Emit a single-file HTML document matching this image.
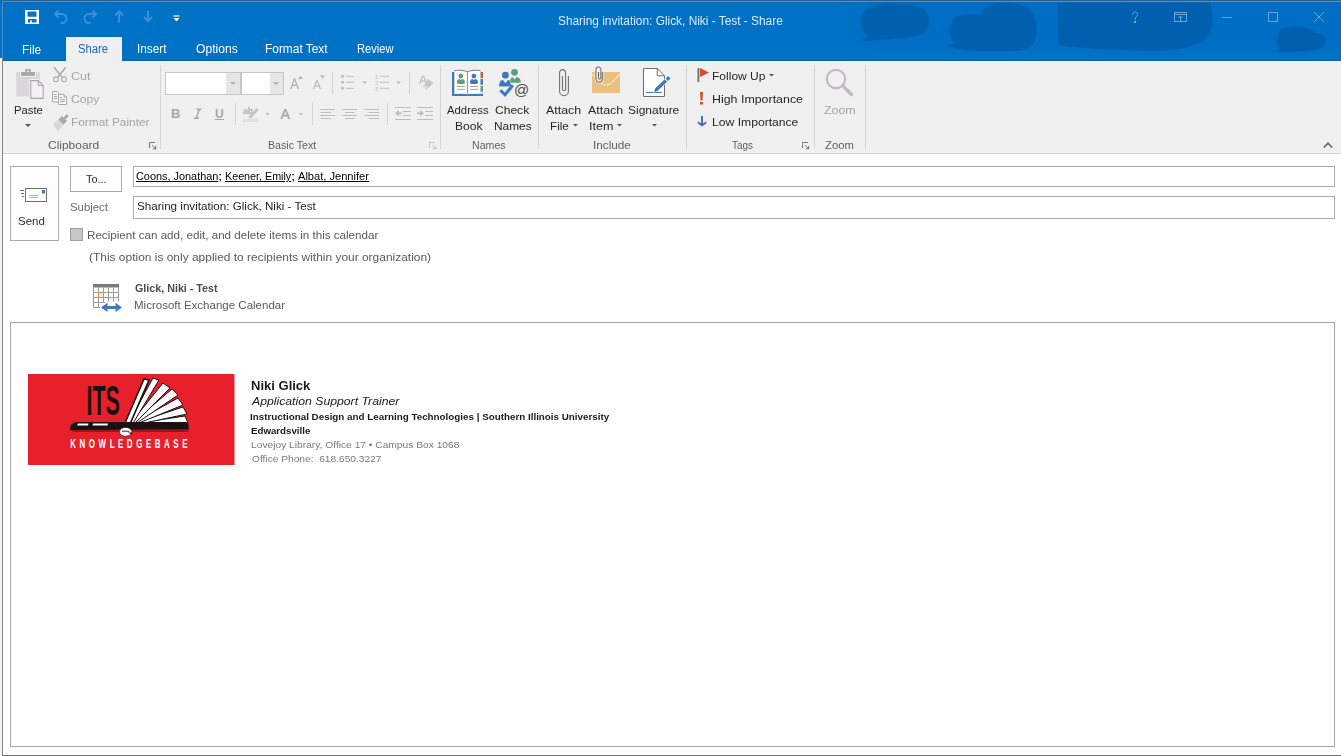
<!DOCTYPE html>
<html><head><meta charset="utf-8">
<style>
*{margin:0;padding:0;box-sizing:border-box}
html,body{width:1341px;height:756px;overflow:hidden;background:#fff;font-family:"Liberation Sans",sans-serif}
.t{position:absolute;white-space:pre;line-height:1;transform-origin:0 0}
.b{position:absolute}
svg{position:absolute;overflow:visible}
</style></head><body>
<!-- title bar -->
<div class="b" style="left:0;top:0;width:1341px;height:61px;background:#0072c6;overflow:hidden">
  <svg style="left:0;top:0" width="1341" height="60" viewBox="0 0 1341 60">
    <defs><linearGradient id="gd" x1="0" x2="1" y1="0" y2="0"><stop offset="0" stop-color="#006ec4" stop-opacity="0"/><stop offset="0.12" stop-color="#006ec4" stop-opacity="1"/></linearGradient>
    <linearGradient id="gv" x1="0" x2="0" y1="0" y2="1"><stop offset="0.8" stop-color="#fff" stop-opacity="1"/><stop offset="1" stop-color="#fff" stop-opacity="0"/></linearGradient>
    <mask id="mv"><rect x="0" y="0" width="1341" height="54" fill="url(#gv)"/></mask></defs>
    <rect x="830" y="2" width="511" height="52" fill="url(#gd)" mask="url(#mv)"/>
    <g fill="#0060af">
      <path d="M888 4 C872 4 861 10 861 22 C861 29 864 34 868 36 L861 41 C874 41 888 39 898 38 C918 38 929 32 929 21 C929 10 920 5 908 5 C902 5 896 4 888 4Z"/>
      <path d="M1003 3 C990 3 982 9 980 15 C974 14 966 14 958 16 C950 19 949 28 950 36 C951 40 953 42 955 43 L947 46 C960 51 985 52 1010 51 C1025 51 1033 48 1035 40 C1038 30 1037 18 1030 10 C1024 5 1015 3 1003 3Z"/>
      <path d="M1058 3 L1210 3 C1215 18 1214 32 1202 41 C1192 48 1172 51 1150 51 L1100 49 C1080 48 1066 46 1058 45 Z"/>
      <path d="M1285 28 C1276 30 1275 44 1280 48 L1278 52 C1295 52 1310 52 1322 48 C1330 42 1326 34 1316 33 C1308 26 1295 26 1285 28Z"/>
    </g>
  </svg>
  <!-- QAT icons -->
  <svg style="left:25px;top:10px" width="15" height="14" viewBox="0 0 15 14">
    <path fill-rule="evenodd" fill="#fff" d="M0 0 H14 V14 H0Z M2.5 1.5 V6.8 H11.5 V1.5Z M3 9 V12.5 H5 V10.5 H7 V12.5 H11.5 V9Z"/>
  </svg>
  <svg style="left:53px;top:9px" width="16" height="16" viewBox="0 0 16 16">
    <path d="M5.5 1.5 L2 5 L5.5 8.5 M2.3 5 H9 C11.8 5 13.5 7 13.5 9.5 C13.5 12 11.8 14 9 14 H7.5" fill="none" stroke="#3a8fd9" stroke-width="2"/>
  </svg>
  <svg style="left:82px;top:9px" width="16" height="16" viewBox="0 0 16 16">
    <path d="M10.5 1.5 L14 5 L10.5 8.5 M13.7 5 H7 C4.2 5 2.5 7 2.5 9.5 C2.5 12 4.2 14 7 14 H8.5" fill="none" stroke="#3a8fd9" stroke-width="2"/>
  </svg>
  <svg style="left:114px;top:10px" width="10" height="13" viewBox="0 0 10 13">
    <path d="M5 2 V12.5 M1 5.5 L5 1.5 L9 5.5" fill="none" stroke="#3a8fd9" stroke-width="2"/>
  </svg>
  <svg style="left:143px;top:10px" width="10" height="13" viewBox="0 0 10 13">
    <path d="M5 0.5 V11 M1 7 L5 11 L9 7" fill="none" stroke="#3a8fd9" stroke-width="2"/>
  </svg>
  <svg style="left:173px;top:15px" width="7" height="8" viewBox="0 0 7 8">
    <path d="M0.5 1 H6.5" stroke="#fff" stroke-width="1.2"/><path d="M0.5 3 H6.5 L3.5 6.5Z" fill="#fff"/>
  </svg>
  <!-- window controls -->
  <svg style="left:1130px;top:11px" width="200" height="14" viewBox="0 0 200 14">
    <g fill="none" stroke="#6aa6dc" stroke-width="1">
      <path d="M2.5 4 C2.5 1.5 4 1 5 1 C6.5 1 7.5 2 7.5 3.5 C7.5 5.5 5 6 5 8.5 V9"/>
      <rect x="4.5" y="10.5" width="1" height="1" fill="#6aa6dc"/>
      <rect x="44.5" y="1.5" width="12" height="9"/>
      <path d="M44.5 3.5 H56.5 M50.5 10 V5 M48.5 7 L50.5 5 L52.5 7"/>
      <path d="M92 6.5 H102"/>
      <rect x="138.5" y="1.5" width="9" height="9"/>
      <path d="M184 1 L194 11 M194 1 L184 11"/>
    </g>
  </svg>
</div>
<div class="b" style="left:2px;top:0;width:1339px;height:1px;background:#2c608d"></div>
<div class="b" style="left:2px;top:1px;width:1339px;height:1px;background:#4893cb"></div>
<div class="b" style="left:2px;top:1px;width:1px;height:57px;background:#4893cb"></div>
<div class="b" style="left:3px;top:2px;width:1338px;height:1px;background:#0a68b4"></div>
<div class="b" style="left:3px;top:2px;width:1px;height:58px;background:#1a67a8"></div>
<div class="b" style="left:3px;top:60px;width:1338px;height:1px;background:#1262a6"></div>

<!-- ribbon -->
<div class="b" style="left:3px;top:61px;width:1338px;height:92px;background:#f0f0f0"></div>
<div class="b" style="left:3px;top:61px;width:1338px;height:1px;background:#dcfbff"></div>
<div class="b" style="left:3px;top:62px;width:1338px;height:1px;background:#e8f2f9"></div>
<!-- active tab -->
<div class="b" style="left:66px;top:37px;width:56px;height:26px;background:#f0f0f0;border:1px solid #dcf8ff;border-bottom:0"></div>
<div class="b" style="left:2px;top:153px;width:1339px;height:1px;background:#d4d4d4"></div>
<div class="b" style="left:0;top:58px;width:2px;height:698px;background:#f3f3f3"></div>
<div class="b" style="left:2px;top:58px;width:1px;height:697px;background:#868686"></div>
<!-- group separators -->
<div class="b" style="left:160px;top:65px;width:1px;height:84px;background:#d5d5d5"></div>
<div class="b" style="left:440px;top:65px;width:1px;height:84px;background:#d5d5d5"></div>
<div class="b" style="left:538px;top:65px;width:1px;height:84px;background:#d5d5d5"></div>
<div class="b" style="left:686px;top:65px;width:1px;height:84px;background:#d5d5d5"></div>
<div class="b" style="left:814px;top:65px;width:1px;height:84px;background:#d5d5d5"></div>
<div class="b" style="left:865px;top:65px;width:1px;height:84px;background:#d5d5d5"></div>

<!-- Clipboard icons -->
<svg style="left:12px;top:64px" width="36" height="38" viewBox="0 0 36 38">
  <rect x="4.2" y="7.9" width="23.6" height="24.6" rx="1" fill="#d9d7d9"/>
  <rect x="8" y="7" width="16" height="6" fill="#f0f0f0"/>
  <rect x="9" y="8" width="14" height="3.9" fill="#a9a9a9"/>
  <rect x="13.2" y="5" width="5.6" height="3.5" rx="1" fill="#a9a9a9"/>
  <rect x="15.2" y="6.5" width="1.7" height="1.6" fill="#f0f0f0"/>
  <path d="M18.8 16.6 H26.3 L31.2 21.5 V34.4 H18.8Z" fill="#f3f1f3" stroke="#f0f0f0" stroke-width="3"/>
  <path d="M18.8 16.6 H26.3 L31.2 21.5 V34.4 H18.8Z" fill="#f3f1f3" stroke="#a9a9a9" stroke-width="1.1"/>
  <path d="M26.3 16.6 V21.5 H31.2" fill="none" stroke="#a9a9a9" stroke-width="1.1"/>
</svg>
<svg style="left:25px;top:124px" width="6" height="4" viewBox="0 0 6 4"><path d="M0 0 H6 L3 3Z" fill="#555"/></svg>
<svg style="left:52px;top:66px" width="16" height="17" viewBox="0 0 16 17">
  <g fill="none" stroke="#a9a9a9"><path d="M2 1.2 L9.8 11" stroke-width="1.5"/><path d="M13.8 1.2 L6 11" stroke-width="1.5"/><circle cx="3.9" cy="13.3" r="2.4" stroke-width="1.1"/><circle cx="12" cy="13.3" r="2.4" stroke-width="1.1"/></g>
</svg>
<svg style="left:52px;top:91px" width="16" height="15" viewBox="0 0 16 15">
  <path d="M0.5 0.5 H5.5 L7 2 V11 H0.5Z" fill="#f4f4f4" stroke="#a9a9a9" stroke-width="1"/>
  <path d="M2 3.5 H4.5 M2 5.5 H5 M2 7.5 H5" stroke="#a9a9a9" stroke-width="1"/>
  <path d="M6.5 3.5 H12 L14.5 6 V13.5 H6.5Z" fill="#fff" stroke="#a9a9a9" stroke-width="1"/>
  <path d="M12 3.5 V6 H14.5" fill="none" stroke="#a9a9a9" stroke-width="1"/>
  <path d="M8 6.5 H10.5 M8 8.5 H13 M8 10.5 H13" stroke="#a9a9a9" stroke-width="1"/>
</svg>
<svg style="left:50px;top:112px" width="20" height="20" viewBox="0 0 20 20">
  <g transform="translate(18 3) rotate(45)">
    <rect x="-1.4" y="0" width="2.8" height="5" rx="1" fill="#a9a9a9"/>
    <rect x="-3.6" y="5" width="7.2" height="5.2" fill="#a9a9a9"/>
    <path d="M-3.8 10.7 H3.8 L4.3 18.5 L-4.3 17Z" fill="#d9d7d9"/>
  </g>
</svg>
<svg style="left:149px;top:142px" width="8" height="8" viewBox="0 0 8 8"><path d="M0.5 6 V0.5 H6" fill="none" stroke="#7a7a7a" stroke-width="1"/><path d="M3.2 3.2 L5 5" stroke="#7a7a7a" stroke-width="1"/><path d="M3.5 7.2 H7.2 V3.5Z" fill="#7a7a7a"/></svg>

<!-- Basic text -->
<div class="b" style="left:165px;top:72px;width:76px;height:23px;border:1px solid #c6c6c6;background:#fff"></div>
<div class="b" style="left:226px;top:73px;width:14px;height:21px;background:#e6e6e6"></div>
<div class="b" style="left:241px;top:72px;width:43px;height:23px;border:1px solid #c6c6c6;background:#fff"></div>
<div class="b" style="left:270px;top:73px;width:13px;height:21px;background:#e6e6e6"></div>
<svg style="left:230px;top:82px" width="6" height="4" viewBox="0 0 6 4"><path d="M0 0 H6 L3 3Z" fill="#b3b3b3"/></svg>
<svg style="left:273px;top:82px" width="6" height="4" viewBox="0 0 6 4"><path d="M0 0 H6 L3 3Z" fill="#b3b3b3"/></svg>
<svg style="left:289px;top:75px" width="40" height="16" viewBox="0 0 40 16">
  <g fill="#b3b3b3"><path d="M1 14 L5 3 H6 L10 14 H8.6 L7.5 11 H3.5 L2.4 14Z M4 9.6 H7 L5.5 5.3Z"/><path d="M9 4 L11.5 1 L14 4Z"/>
  <path d="M24 14 L27.5 5 H28.5 L32 14 H30.8 L29.9 11.6 H26.1 L25.2 14Z M26.5 10.4 H29.5 L28 6.5Z"/><path d="M31 0.5 H36 L33.5 3.5Z"/></g>
</svg>
<div class="b" style="left:332px;top:72px;width:1px;height:22px;background:#d5d5d5"></div>
<div class="b" style="left:409px;top:72px;width:1px;height:22px;background:#d5d5d5"></div>
<svg style="left:340px;top:74px" width="65" height="18" viewBox="0 0 65 18">
  <g fill="#bdbdbd"><circle cx="2.5" cy="2.3" r="1.5"/><circle cx="2.5" cy="8.3" r="1.5"/><circle cx="2.5" cy="14.3" r="1.5"/></g>
  <g stroke="#bdbdbd" stroke-width="1"><path d="M6 2.3 H14 M6 8.3 H14 M6 14.3 H14 M40 2.3 H49 M40 8.3 H49 M40 14.3 H49"/></g>
  <path d="M22 7.5 H27 L24.5 10Z M56 7.5 H61 L58.5 10Z" fill="#bdbdbd"/>
  <text x="35" y="5" font-size="5.5" fill="#bdbdbd" font-family="Liberation Sans">1</text>
  <text x="35" y="11" font-size="5.5" fill="#bdbdbd" font-family="Liberation Sans">2</text>
  <text x="35" y="17" font-size="5.5" fill="#bdbdbd" font-family="Liberation Sans">3</text>
</svg>
<svg style="left:419px;top:75px" width="15" height="16" viewBox="0 0 15 16">
  <path d="M0.5 9 L3.5 1 H4.5 L7.5 9 M1.8 6 H6.2" fill="none" stroke="#b3b3b3" stroke-width="1"/>
  <path d="M9 4 L14.5 8 L9.5 13 L5 10Z" fill="#c6c6c6"/><path d="M4.5 10.5 L9 13.5 L8 15 L3.5 12Z" fill="#d6d6d6"/>
</svg>
<svg style="left:171px;top:108px" width="60" height="13" viewBox="0 0 60 13">
  <text x="0" y="10" font-size="13" font-weight="bold" fill="#a8a8a8" font-family="Liberation Sans">B</text>
  <path d="M25.5 1.3 H30.5 M23 10.3 H28 M28.3 1.3 L25.2 10.3" fill="none" stroke="#a8a8a8" stroke-width="1.5"/>
  <text x="44" y="10" font-size="12" font-weight="bold" fill="#a8a8a8" font-family="Liberation Sans">U</text>
  <rect x="44" y="11" width="9" height="1" fill="#a8a8a8"/>
</svg>
<div class="b" style="left:235px;top:103px;width:1px;height:22px;background:#d5d5d5"></div>
<div class="b" style="left:312px;top:103px;width:1px;height:22px;background:#d5d5d5"></div>
<div class="b" style="left:387px;top:103px;width:1px;height:22px;background:#d5d5d5"></div>
<svg style="left:243px;top:106px" width="62" height="17" viewBox="0 0 62 17">
  <text x="0" y="8" font-size="8.5" font-weight="bold" fill="#ababab" font-family="Liberation Sans">ab</text>
  <path d="M14 2 L16 4 L8 12 L5.5 12.5 L6 10Z" fill="#c3c3c3"/>
  <rect x="0" y="13" width="15.5" height="3" fill="#e2dfe2"/>
  <path d="M22 7 H27 L24.5 9.5Z" fill="#bdbdbd"/>
  <path d="M37.3 13 L41.3 3 H43.3 L47.3 13 H45.2 L44.3 10.5 H40.3 L39.4 13Z M40.9 8.8 H43.7 L42.3 5Z" fill="#ababab"/>
  <path d="M55.5 7 H60.5 L58 9.5Z" fill="#bdbdbd"/>
</svg>
<svg style="left:320px;top:108px" width="114" height="13" viewBox="0 0 114 13">
  <g stroke="#bdbdbd" stroke-width="1.1">
    <path d="M0.5 1.5 H15 M0.5 4.5 H11 M0.5 7.5 H15 M0.5 10.5 H11"/>
    <path d="M22.5 1.5 H37 M25 4.5 H34.5 M22.5 7.5 H37 M25 10.5 H34.5"/>
    <path d="M44.5 1.5 H59 M48.5 4.5 H59 M44.5 7.5 H59 M48.5 10.5 H59"/>
    <path d="M75 -0.5 H91 M83 3.5 H91 M83 7.5 H91 M75 11.5 H91"/>
    <path d="M97 -0.5 H113 M105 3.5 H113 M105 7.5 H113 M97 11.5 H113"/>
  </g>
  <path d="M75 5.2 L79 2 V4.5 H82 V6 H79 V8.5Z" fill="#bdbdbd"/>
  <path d="M104 5.2 L100 2 V4.5 H97 V6 H100 V8.5Z" fill="#bdbdbd"/>
</svg>
<svg style="left:429px;top:142px" width="8" height="8" viewBox="0 0 8 8"><path d="M0.5 6 V0.5 H6" fill="none" stroke="#c4c4c4" stroke-width="1"/><path d="M3.2 3.2 L5 5" stroke="#c4c4c4" stroke-width="1"/><path d="M3.5 7.2 H7.2 V3.5Z" fill="#c4c4c4"/></svg>

<!-- Names -->
<svg style="left:448px;top:66px" width="40" height="34" viewBox="0 0 40 34">
  <path d="M4 6 H6.5 V27.7 H35 V30 H4Z" fill="#3f78bd"/>
  <rect x="6" y="4" width="27" height="23.7" fill="#fff"/>
  <path d="M6.3 4.6 C10 4 16 4 19.4 5.8 C23 4 29 4 32.6 4.6" fill="none" stroke="#787878" stroke-width="1"/>
  <path d="M6.5 4.5 V27.5 M32.5 4.5 V27.5" stroke="#c8c8c8" stroke-width="0.8"/>
  <path d="M19.4 5.5 V27.7" stroke="#8a8a8a" stroke-width="1"/>
  <path d="M6 27.7 C11 27 16 27 19.4 28 C23 27 28 27 33 27.7" fill="none" stroke="#dde6f2" stroke-width="0.6"/>
  <rect x="32.7" y="6" width="2.3" height="6" fill="#c8603e"/>
  <rect x="32.7" y="13" width="2.3" height="5.7" fill="#3f78bd"/>
  <rect x="32.7" y="20" width="2.3" height="5.7" fill="#5d9f7b"/>
  <circle cx="12.8" cy="10.1" r="2.4" fill="#5d9f7b"/>
  <path d="M8.8 16.5 C8.8 14 10.2 13 11.8 13 L12.8 14.3 L13.8 13 C15.5 13 17 14 17 16.5 C17 17.5 16.2 17.9 15 17.9 H10.8 C9.6 17.9 8.8 17.5 8.8 16.5Z" fill="#5d9f7b"/>
  <circle cx="25.9" cy="10.1" r="2.4" fill="#3f78bd"/>
  <path d="M21.9 16.5 C21.9 14 23.3 13 24.9 13 L25.9 14.3 L26.9 13 C28.6 13 30.1 14 30.1 16.5 C30.1 17.5 29.3 17.9 28.1 17.9 H23.9 C22.7 17.9 21.9 17.5 21.9 16.5Z" fill="#3f78bd"/>
  <path d="M9 20.5 H17 M9 23.4 H17 M22 20.5 H30 M22 23.4 H30" stroke="#9c9c9c" stroke-width="0.9"/>
</svg>
<svg style="left:494px;top:64px" width="40" height="36" viewBox="0 0 40 36">
  <circle cx="20.5" cy="8.3" r="3.4" fill="#5d9f7b"/>
  <path d="M16 18.8 C16 15 17.3 13.3 18.8 13.3 L20.5 15.8 L22.2 13.3 C25 13.3 26.8 15 26.8 18.8Z" fill="#5d9f7b"/>
  <circle cx="11.4" cy="11.2" r="3.4" fill="#3f78bd" stroke="#f0f0f0" stroke-width="0.8" paint-order="stroke"/>
  <path d="M5.2 22.5 C5.2 18 6.6 16 8.8 16 L11.4 19 L14 16 C15.8 16 16.9 17.5 16.9 22.5Z" fill="#3f78bd" stroke="#f0f0f0" stroke-width="0.8" paint-order="stroke"/>
  <path d="M6.4 26.3 L11 30.8 L18.8 21.2" fill="none" stroke="#3f78bd" stroke-width="3"/>
  <text x="20" y="31" font-size="15" fill="#4a4a4a" font-family="Liberation Sans">@</text>
</svg>

<!-- Include -->
<svg style="left:552px;top:64px" width="24" height="36" viewBox="0 0 24 36">
  <path d="M10.5 12 V25.2 A1.55 1.55 0 0 0 13.6 25.2 V8.6 A3 3 0 0 0 7.6 8.6 V27.3 A4.4 4.4 0 0 0 16.4 27.3 V12" fill="none" stroke="#707070" stroke-width="1.1"/>
</svg>
<svg style="left:588px;top:64px" width="36" height="32" viewBox="0 0 36 32">
  <rect x="4" y="8" width="28" height="21" fill="#e8c080"/>
  <path d="M4.3 10 C9 15 13 21 18 21.3 C23 21.5 27 15 31.8 9.6" fill="none" stroke="#fbe8c6" stroke-width="1.1"/>
  <path d="M10.5 8 V14 A1.2 1.2 0 0 0 12.9 14 V5.5 A2.5 2.5 0 0 0 7.9 5.5 V15.2 A3.2 3.2 0 0 0 14.3 15.2 V8" fill="none" stroke="#f3e6cf" stroke-width="2.6"/>
  <path d="M10.5 8 V14 A1.2 1.2 0 0 0 12.9 14 V5.5 A2.5 2.5 0 0 0 7.9 5.5 V15.2 A3.2 3.2 0 0 0 14.3 15.2 V8" fill="none" stroke="#656565" stroke-width="1"/>
</svg>
<svg style="left:643px;top:68px" width="30" height="30" viewBox="0 0 30 30">
  <path d="M0.5 0.5 H14.2 L21.5 7.8 V28.5 H0.5Z" fill="#fff" stroke="#6e6e6e" stroke-width="1"/>
  <path d="M14.2 0.5 V7.8 H21.5" fill="none" stroke="#6e6e6e" stroke-width="1"/>
  <path d="M3 24.5 H18.8" stroke="#3f78bd" stroke-width="1"/>
  <g transform="translate(11 24) rotate(-44)">
    <path d="M0 0 L3.2 -1.7 H16.5 V1.7 H3.2Z M17.7 -1.7 H21.3 V1.7 H17.7Z" fill="#3f78bd" stroke="#fff" stroke-width="1" paint-order="stroke"/>
  </g>
</svg>
<svg style="left:573px;top:124px" width="6" height="4" viewBox="0 0 6 4"><path d="M0 0 H5 L2.5 2.5Z" fill="#555"/></svg>
<svg style="left:617px;top:124px" width="6" height="4" viewBox="0 0 6 4"><path d="M0 0 H5 L2.5 2.5Z" fill="#555"/></svg>
<svg style="left:652px;top:124px" width="6" height="4" viewBox="0 0 6 4"><path d="M0 0 H5 L2.5 2.5Z" fill="#555"/></svg>

<!-- Tags -->
<svg style="left:697px;top:67px" width="13" height="15" viewBox="0 0 13 15">
  <rect x="0.5" y="1" width="1.8" height="14" fill="#6a6a6a"/>
  <path d="M3 1 L12 5.5 L3 10Z" fill="#d44e2c"/>
</svg>
<svg style="left:769px;top:74px" width="6" height="4" viewBox="0 0 6 4"><path d="M0 0 H5 L2.5 2.5Z" fill="#555"/></svg>
<svg style="left:699px;top:92px" width="5" height="13" viewBox="0 0 5 13">
  <path d="M1 0 H4 L3.5 8.5 H1.5Z" fill="#d44e2c"/><rect x="1" y="10" width="3" height="2.5" fill="#d44e2c"/>
</svg>
<svg style="left:697px;top:115px" width="10" height="12" viewBox="0 0 10 12">
  <path d="M0.8 6 L4 8.6 V1 H6 V8.6 L9.2 6 V8.4 L5 11.6 L0.8 8.4Z" fill="#3d72b4"/>
</svg>
<svg style="left:802px;top:142px" width="8" height="8" viewBox="0 0 8 8"><path d="M0.5 6 V0.5 H6" fill="none" stroke="#7a7a7a" stroke-width="1"/><path d="M3.2 3.2 L5 5" stroke="#7a7a7a" stroke-width="1"/><path d="M3.5 7.2 H7.2 V3.5Z" fill="#7a7a7a"/></svg>
<!-- Zoom -->
<svg style="left:825px;top:68px" width="30" height="30" viewBox="0 0 30 30">
  <circle cx="11" cy="11" r="9.2" fill="#f2eff2" stroke="#bdbdbd" stroke-width="2.2"/>
  <path d="M17.5 17.5 L26.5 26.5" stroke="#bdbdbd" stroke-width="3.3" stroke-linecap="round"/>
</svg>
<!-- collapse caret -->
<svg style="left:1323px;top:141px" width="10" height="8" viewBox="0 0 10 8"><path d="M0.8 6.5 L5 2.2 L9.2 6.5" fill="none" stroke="#666" stroke-width="1.7"/></svg>

<!-- Compose -->
<div class="b" style="left:10px;top:166px;width:49px;height:75px;border:1px solid #ababab;background:#fdfdfd"></div>
<svg style="left:19px;top:187px" width="30" height="16" viewBox="0 0 30 16">
  <rect x="6.5" y="1.5" width="21" height="13" fill="#fff" stroke="#6e6e6e" stroke-width="1"/>
  <rect x="23" y="3" width="3" height="3.5" fill="#3f78bd"/>
  <path d="M10 8.5 H20 M10 10.5 H19" stroke="#a0a0a0" stroke-width="0.8"/>
  <path d="M1 3.5 H5 M2 6.5 H5 M3 9.5 H5" stroke="#6e6e6e" stroke-width="1"/>
</svg>
<div class="b" style="left:70px;top:166px;width:52px;height:26px;border:1px solid #ababab;background:#fdfdfd"></div>
<div class="b" style="left:133px;top:166px;width:1202px;height:21px;border:1px solid #ababab;background:#fff"></div>
<div class="b" style="left:133px;top:196px;width:1202px;height:23px;border:1px solid #ababab;background:#fff"></div>
<div class="b" style="left:70px;top:228px;width:13px;height:13px;border:1px solid #9f9f9f;background:#c7c7c7"></div>
<!-- calendar icon -->
<svg style="left:92px;top:283px" width="32" height="30" viewBox="0 0 32 30">
  <rect x="1" y="1" width="26" height="3.5" fill="#7a7a7a"/>
  <g fill="none" stroke="#9c9c9c" stroke-width="1">
    <path d="M1.5 4.5 V24.5 H8 M26.5 4.5 V18.5"/>
    <path d="M1 9.5 H27 M1 14.5 H27 M1 19.5 H13 M6.5 4.5 V24.5 M11.5 4.5 V20 M16.5 4.5 V18.5 M21.5 4.5 V18.5"/>
  </g>
  <rect x="6.5" y="9.5" width="5" height="5" fill="#fff6dc" stroke="#d58a45" stroke-width="1"/>
  <path d="M9 24.4 L15.5 19.8 V22.9 H23.5 V19.8 L30 24.4 L23.5 29 V25.9 H15.5 V29Z" fill="#3f78bd" stroke="#fff" stroke-width="1.4" paint-order="stroke"/>
</svg>

<!-- body -->
<div class="b" style="left:10px;top:322px;width:1325px;height:425px;border:1px solid #a2a5aa;background:#fff"></div>
<!-- logo -->
<svg style="left:28px;top:374px" width="207" height="91" viewBox="0 0 207 91">
  <rect x="0" y="0" width="206.5" height="91" fill="#e8202b"/>
  <g transform="translate(58.5 40.7) scale(0.62 1)"><text x="0" y="0" font-size="42" font-weight="bold" fill="#1a1010" font-family="Liberation Sans" textLength="54" lengthAdjust="spacingAndGlyphs">ITS</text></g>
  <g fill="#fff" stroke="#1a1010" stroke-width="1">
    <path d="M104 50 L157 42 L160 49 L107 51Z"/>
    <path d="M104 50 L155 33 L159 40 L107 51Z"/>
    <path d="M103 50 L150 24 L155 31 L106 51Z"/>
    <path d="M103 50 L144 15 L150 21 L106 51Z"/>
    <path d="M102 50 L135 9 L142 14 L105 51Z"/>
    <path d="M100 50 L125 4 L131 6 L104 51Z"/>
    <path d="M97 49 L116 5 L121 6 L102 50Z" stroke-width="1.6"/>
  </g>
  <path d="M42 55 C42 51 45 48 50 48 L160 48 L161 55.5 L42 56Z" fill="#1a1010"/>
  <path d="M42 56 L161 56 L160 58 L46 58Z" fill="#9a1519"/>
  <path d="M50 49.5 L60.5 49.5 L60 51.5 L49 51.5Z M65 49.5 L80 49.5 L79.5 51.5 L64.5 51.5Z" fill="#fff"/>
  <ellipse cx="97.6" cy="57.8" rx="6.2" ry="4.4" fill="#fff" stroke="#1a1010" stroke-width="0.6"/><path d="M93.8 57.2 H101.5" stroke="#1a1010" stroke-width="0.9"/><path d="M99.5 58.6 L104.2 58.6 L104.2 60.5Z" fill="#1a1010"/>
  <g transform="translate(42.3 74) scale(0.58 1)"><text x="0" y="0" font-size="13.7" font-weight="bold" fill="#fff" font-family="Liberation Sans" textLength="202" lengthAdjust="spacing">KNOWLEDGEBASE</text></g>
</svg>

<div class="t" style="left:558.45px;top:15.42px;font-size:12.5px;color:#d9eafb;transform:scaleX(0.9498)">Sharing invitation: Glick, Niki - Test - Share</div>
<div class="t" style="left:22.21px;top:44.34px;font-size:12px;color:#ffffff;transform:scaleX(0.9944)">File</div>
<div class="t" style="left:78.16px;top:43.04px;font-size:12px;color:#2864ae;transform:scaleX(0.9387)">Share</div>
<div class="t" style="left:136.62px;top:43.04px;font-size:12px;color:#ffffff;transform:scaleX(0.9793)">Insert</div>
<div class="t" style="left:195.70px;top:43.04px;font-size:12px;color:#ffffff;transform:scaleX(1.0098)">Options</div>
<div class="t" style="left:265.31px;top:43.04px;font-size:12px;color:#ffffff;transform:scaleX(0.9919)">Format Text</div>
<div class="t" style="left:356.77px;top:43.04px;font-size:12px;color:#ffffff;transform:scaleX(0.9256)">Review</div>
<div class="t" style="left:13.52px;top:105.27px;font-size:11.5px;color:#262626;transform:scaleX(0.9821)">Paste</div>
<div class="t" style="left:70.52px;top:71.27px;font-size:11.5px;color:#a5a5a5;transform:scaleX(1.0824)">Cut</div>
<div class="t" style="left:70.55px;top:93.97px;font-size:11.5px;color:#a5a5a5;transform:scaleX(1.0538)">Copy</div>
<div class="t" style="left:70.57px;top:116.97px;font-size:11.5px;color:#a5a5a5;transform:scaleX(1.0320)">Format Painter</div>
<div class="t" style="left:47.76px;top:139.87px;font-size:11.5px;color:#5f5f5f;transform:scaleX(1.0396)">Clipboard</div>
<div class="t" style="left:267.78px;top:139.87px;font-size:11.5px;color:#5f5f5f;transform:scaleX(0.9235)">Basic Text</div>
<div class="t" style="left:447.30px;top:105.07px;font-size:11.5px;color:#262626;transform:scaleX(0.9857)">Address</div>
<div class="t" style="left:454.65px;top:120.97px;font-size:11.5px;color:#262626;transform:scaleX(1.0520)">Book</div>
<div class="t" style="left:495.45px;top:105.07px;font-size:11.5px;color:#262626;transform:scaleX(1.0484)">Check</div>
<div class="t" style="left:493.57px;top:120.97px;font-size:11.5px;color:#262626;transform:scaleX(1.0314)">Names</div>
<div class="t" style="left:472.08px;top:139.87px;font-size:11.5px;color:#5f5f5f;transform:scaleX(0.9229)">Names</div>
<div class="t" style="left:546.00px;top:105.07px;font-size:11.5px;color:#262626;transform:scaleX(1.0781)">Attach</div>
<div class="t" style="left:550.48px;top:120.97px;font-size:11.5px;color:#262626;transform:scaleX(1.0176)">File</div>
<div class="t" style="left:588.00px;top:105.07px;font-size:11.5px;color:#262626;transform:scaleX(1.0781)">Attach</div>
<div class="t" style="left:589.31px;top:120.97px;font-size:11.5px;color:#262626;transform:scaleX(1.0905)">Item</div>
<div class="t" style="left:627.96px;top:105.07px;font-size:11.5px;color:#262626;transform:scaleX(1.0417)">Signature</div>
<div class="t" style="left:592.58px;top:139.87px;font-size:11.5px;color:#5f5f5f;transform:scaleX(1.0194)">Include</div>
<div class="t" style="left:712.45px;top:71.17px;font-size:11.5px;color:#262626;transform:scaleX(1.0460)">Follow Up</div>
<div class="t" style="left:712.42px;top:93.97px;font-size:11.5px;color:#262626;transform:scaleX(1.0783)">High Importance</div>
<div class="t" style="left:712.44px;top:117.07px;font-size:11.5px;color:#262626;transform:scaleX(1.0556)">Low Importance</div>
<div class="t" style="left:731.60px;top:139.87px;font-size:11.5px;color:#5f5f5f;transform:scaleX(0.8667)">Tags</div>
<div class="t" style="left:824.20px;top:105.27px;font-size:11.5px;color:#a5a5a5;transform:scaleX(1.0759)">Zoom</div>
<div class="t" style="left:825.00px;top:139.87px;font-size:11.5px;color:#5f5f5f;transform:scaleX(0.9828)">Zoom</div>
<div class="t" style="left:18.45px;top:216.49px;font-size:11px;color:#303030;transform:scaleX(1.0458)">Send</div>
<div class="t" style="left:85.50px;top:174.19px;font-size:11px;color:#303030;transform:scaleX(0.9900)">To...</div>
<div class="t" style="left:69.57px;top:202.19px;font-size:11px;color:#6b6b6b;transform:scaleX(1.0333)">Subject</div>
<div class="t" style="left:136.54px;top:201.09px;font-size:11px;color:#1e1e1e;transform:scaleX(1.0571)">Sharing invitation: Glick, Niki - Test</div>
<div class="t" style="left:87.24px;top:230.09px;font-size:11px;color:#5a5a5a;transform:scaleX(1.0564)">Recipient can add, edit, and delete items in this calendar</div>
<div class="t" style="left:88.71px;top:252.29px;font-size:11px;color:#5a5a5a;transform:scaleX(1.0863)">(This option is only applied to recipients within your organization)</div>
<div class="t" style="left:135.00px;top:282.59px;font-size:11px;color:#4a4a4a;font-weight:bold;transform:scaleX(0.9741)">Glick, Niki - Test</div>
<div class="t" style="left:133.95px;top:300.09px;font-size:11px;color:#5a5a5a;transform:scaleX(1.0469)">Microsoft Exchange Calendar</div>
<div class="t" style="left:136.01px;top:171.49px;font-size:11px;color:#000;text-decoration:underline;transform:scaleX(0.9902)">Coons, Jonathan</div>
<div class="t" style="left:218.00px;top:171.49px;font-size:11px;color:#000;transform:scaleX(1.4000)">;</div>
<div class="t" style="left:224.62px;top:171.49px;font-size:11px;color:#000;text-decoration:underline;transform:scaleX(0.9761)">Keener, Emily</div>
<div class="t" style="left:291.00px;top:171.49px;font-size:11px;color:#000;transform:scaleX(1.4000)">;</div>
<div class="t" style="left:298.00px;top:171.49px;font-size:11px;color:#000;text-decoration:underline;transform:scaleX(1.0086)">Albat, Jennifer</div>
<div class="t" style="left:250.61px;top:379.74px;font-size:12px;color:#1a1a1a;font-weight:bold;transform:scaleX(1.0852)">Niki Glick</div>
<div class="t" style="left:251.70px;top:397.17px;font-size:10.2px;color:#1a1a1a;font-style:italic;transform:scaleX(1.2008)">Application Support Trainer</div>
<div class="t" style="left:249.91px;top:413.38px;font-size:9px;color:#1a1a1a;font-weight:bold;transform:scaleX(1.0906)">Instructional Design and Learning Technologies | Southern Illinois University</div>
<div class="t" style="left:250.62px;top:427.28px;font-size:9px;color:#1a1a1a;font-weight:bold;transform:scaleX(1.0778)">Edwardsville</div>
<div class="t" style="left:250.56px;top:441.48px;font-size:9px;color:#7a7a7a;transform:scaleX(1.1363)">Lovejoy Library, Office 17 • Campus Box 1068</div>
<div class="t" style="left:251.70px;top:455.18px;font-size:9px;color:#7a7a7a;transform:scaleX(1.1316)">Office Phone:  618.650.3227</div>

<!-- to names underlined -->
<div class="b" style="left:2px;top:755px;width:1339px;height:1px;background:#6f6f6f"></div>
</body></html>
